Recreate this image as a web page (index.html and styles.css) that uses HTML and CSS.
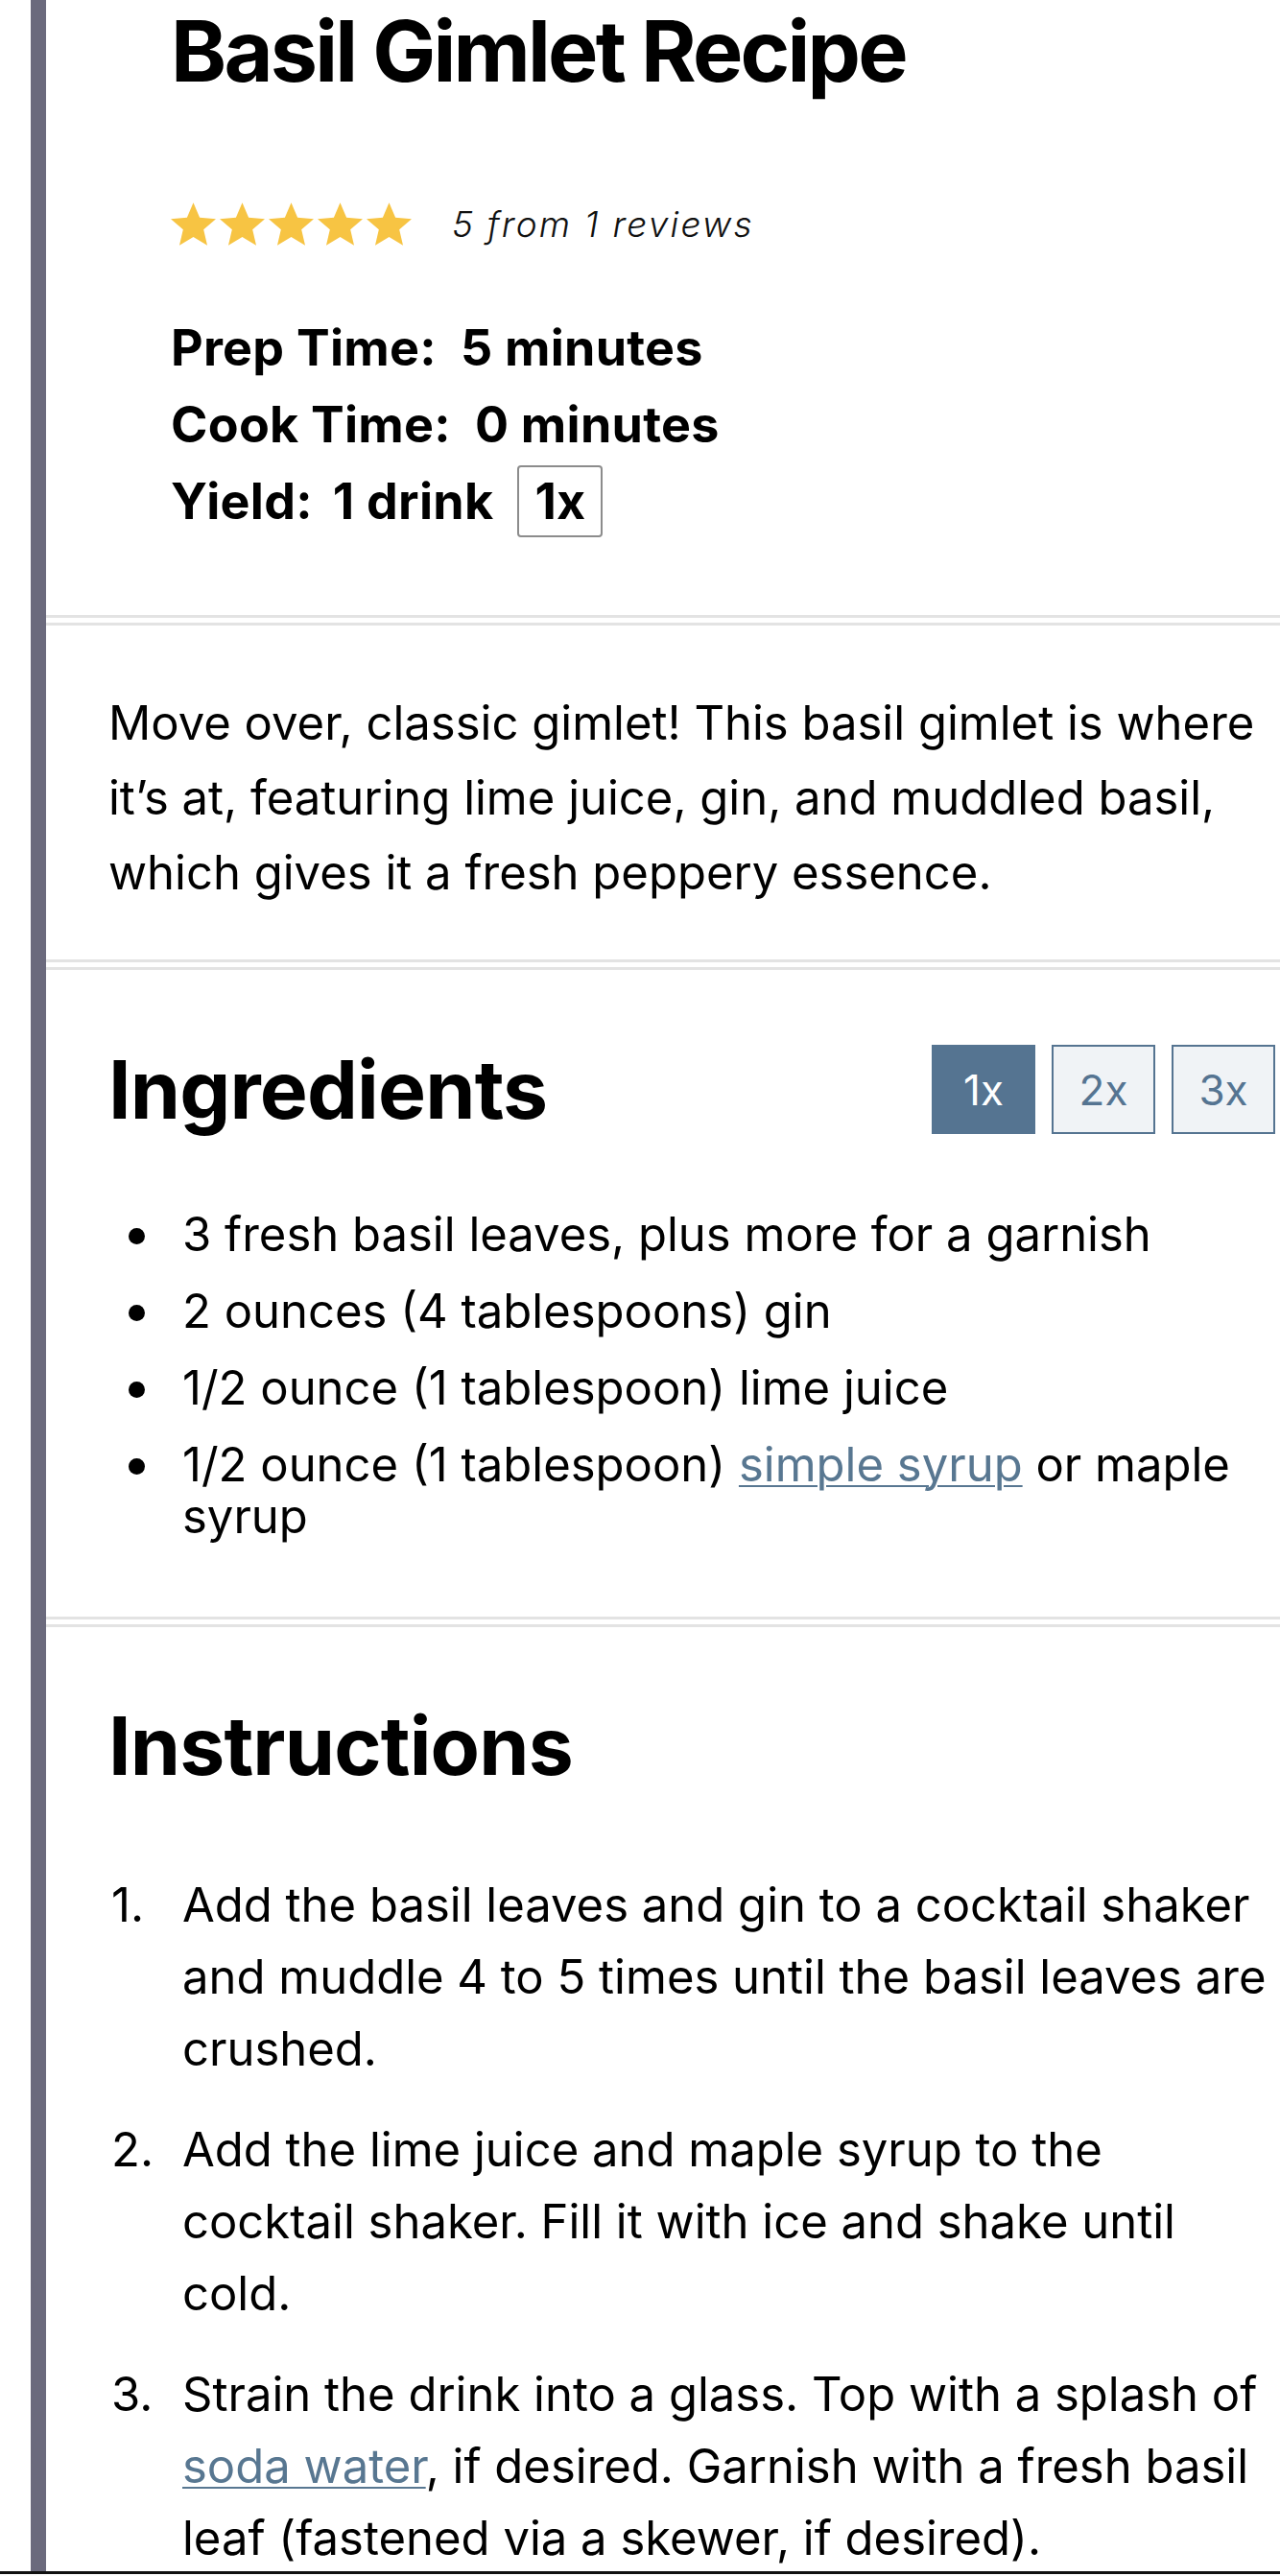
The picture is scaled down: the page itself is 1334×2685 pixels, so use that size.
FILE: index.html
```html
<!DOCTYPE html>
<html lang="en">
<head>
<meta charset="utf-8">
<title>Basil Gimlet Recipe</title>
<link rel="stylesheet" href="styles.css">
</head>
<body>
<div class="page">
  <div class="frame">
    <header class="recipe-header">
      <h1 class="title">Basil Gimlet Recipe</h1>
      <div class="rating">
        <div class="stars">
          <svg class="star" viewBox="2 2 20 19"><path d="M12 17.27L18.18 21l-1.64-7.03L22 9.24l-7.19-.61L12 2 9.19 8.63 2 9.24l5.46 4.73L5.82 21z"/></svg>
          <svg class="star" viewBox="2 2 20 19"><path d="M12 17.27L18.18 21l-1.64-7.03L22 9.24l-7.19-.61L12 2 9.19 8.63 2 9.24l5.46 4.73L5.82 21z"/></svg>
          <svg class="star" viewBox="2 2 20 19"><path d="M12 17.27L18.18 21l-1.64-7.03L22 9.24l-7.19-.61L12 2 9.19 8.63 2 9.24l5.46 4.73L5.82 21z"/></svg>
          <svg class="star" viewBox="2 2 20 19"><path d="M12 17.27L18.18 21l-1.64-7.03L22 9.24l-7.19-.61L12 2 9.19 8.63 2 9.24l5.46 4.73L5.82 21z"/></svg>
          <svg class="star" viewBox="2 2 20 19"><path d="M12 17.27L18.18 21l-1.64-7.03L22 9.24l-7.19-.61L12 2 9.19 8.63 2 9.24l5.46 4.73L5.82 21z"/></svg>
        </div>
        <span class="rating-text">5 from 1 reviews</span>
      </div>
      <div class="meta">
        <div class="meta-row"><span class="meta-label">Prep Time:</span><span>5 minutes</span></div>
        <div class="meta-row"><span class="meta-label">Cook Time:</span><span>0 minutes</span></div>
        <div class="meta-row"><span class="meta-label yield-label">Yield:</span><span>1 drink</span><span class="yield-btn">1x</span></div>
      </div>
    </header>

    <div class="divider"></div>

    <section class="summary">
      <p>Move over, classic gimlet! This basil gimlet is where it’s at, featuring lime juice, gin, and muddled basil, which gives it a fresh peppery essence.</p>
    </section>

    <div class="divider"></div>

    <section class="ingredients">
      <div class="section-head">
        <h2 class="section-title">Ingredients</h2>
        <div class="scale">
          <button class="scale-btn active">1x</button>
          <button class="scale-btn">2x</button>
          <button class="scale-btn">3x</button>
        </div>
      </div>
      <ul class="ing-list">
        <li>3 fresh basil leaves, plus more for a garnish</li>
        <li>2 ounces (4 tablespoons) gin</li>
        <li>1/2 ounce (1 tablespoon) lime juice</li>
        <li>1/2 ounce (1 tablespoon) <a href="#">simple syrup</a> or maple syrup</li>
      </ul>
    </section>

    <div class="divider"></div>

    <section class="instructions">
      <h2 class="section-title">Instructions</h2>
      <ol class="steps">
        <li>Add the basil leaves and gin to a cocktail shaker and muddle 4 to 5 times until the basil leaves are crushed.</li>
        <li>Add the lime juice and maple syrup to the cocktail shaker. Fill it with ice and shake until cold.</li>
        <li>Strain the drink into a glass. Top with a splash of <a href="#">soda water</a>, if desired. Garnish with a fresh basil leaf (fastened via a skewer, if desired).</li>
      </ol>
    </section>
  </div>
</div>
</body>
</html>
```

FILE: styles.css
```css
* { box-sizing: border-box; }

html, body {
  margin: 0;
  padding: 0;
  background: #fff;
}

body {
  font-family: "Inter", "Roboto", "Liberation Sans", sans-serif;
  color: #000;
}

.page {
  height: 2683px;
  overflow: hidden;
  border-bottom: 3px solid #111;
  padding-left: 32px;
}

.frame {
  height: 100%;
  border-left: 16px solid #6b6a7d;
}

/* Header */
.recipe-header {
  padding: 0 0 79px 130px;
}

.title {
  margin: 0;
  font-size: 88px;
  line-height: 106px;
  font-weight: 700;
  letter-spacing: -0.032em;
}

.rating {
  display: flex;
  align-items: center;
  height: 45px;
  margin-top: 105px;
}

.stars {
  display: flex;
  gap: 4px;
}

.star {
  width: 47px;
  height: 45px;
  fill: #f7c443;
}

.rating-text {
  margin-left: 42px;
  font-size: 37px;
  font-style: italic;
  font-weight: 300;
  letter-spacing: 0.06em;
  color: #111;
}

.meta {
  margin-top: 66px;
  font-size: 52px;
  font-weight: 700;
  letter-spacing: 0.005em;
}

.meta-row {
  display: flex;
  align-items: center;
  gap: 25px;
  height: 80px;
}

.yield-label {
  margin-right: -4px;
}

.yield-btn {
  display: flex;
  align-items: center;
  justify-content: center;
  width: 89px;
  height: 75px;
  border: 2px solid #8c8c8c;
  border-radius: 4px;
  letter-spacing: 0;
}

/* Dividers */
.divider {
  height: 11px;
  border-top: 3px solid #e3e3e3;
  border-bottom: 3px solid #e3e3e3;
}

/* Summary */
.summary {
  padding: 63px 5px 51px 65px;
}

.summary p {
  margin: 0;
  font-size: 49px;
  line-height: 78px;
}

a {
  color: #587791;
  text-decoration: underline;
  text-decoration-thickness: 2px;
  text-underline-offset: 4px;
}

/* Ingredients */
.ingredients {
  padding: 78px 5px 77px 65px;
}

.section-head {
  display: flex;
  align-items: center;
  justify-content: space-between;
  height: 93px;
}

.section-title {
  margin: 0;
  font-size: 84px;
  line-height: 93px;
  font-weight: 700;
  letter-spacing: -0.01em;
}

.scale {
  display: flex;
  gap: 17px;
}

.scale-btn {
  width: 108px;
  height: 93px;
  margin: 0;
  padding: 0;
  border: 2px solid #557491;
  background: #f0f3f6;
  color: #557491;
  font-family: inherit;
  font-size: 44px;
  font-weight: 400;
}

.scale-btn.active {
  background: #557491;
  color: #fff;
}

.ing-list {
  margin: 78px 0 0;
  padding-left: 77px;
  list-style: none;
  font-size: 49px;
  line-height: 54px;
}

.ing-list li::before {
  content: "";
  display: inline-block;
  width: 17px;
  height: 17px;
  margin-left: -56px;
  margin-right: 39px;
  border-radius: 50%;
  background: #000;
  vertical-align: 7px;
}

.ing-list li + li {
  margin-top: 26px;
}

/* Instructions */
.instructions {
  padding: 77px 5px 0 65px;
}

.steps {
  margin: 82px 0 0;
  padding-left: 77px;
  list-style: none;
  counter-reset: step;
  font-size: 49px;
  line-height: 75px;
}

.steps li {
  counter-increment: step;
}

.steps li::before {
  content: counter(step) ".";
  display: inline-block;
  width: 74px;
  margin-left: -74px;
}

.steps li + li {
  margin-top: 30px;
}
```
